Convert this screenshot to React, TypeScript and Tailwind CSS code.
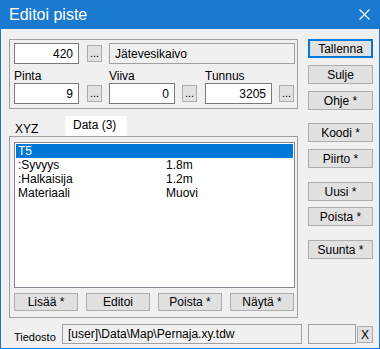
import React from 'react';

const btn =
  'bg-[#e1e1e1] border border-[#adadad] flex items-center justify-center leading-none text-black';

function Dots() {
  return (
    <div className="w-[15px] h-[17px] bg-[#e1e1e1] border border-[#adadad] flex items-end justify-center pb-[2px] leading-none text-[11px]">
      ...
    </div>
  );
}

function NumField({ value, className }: { value: string; className: string }) {
  return (
    <div
      className={`${className} h-[21px] bg-white border border-[#7a7a7a] flex items-center justify-end pr-[5px]`}
    >
      {value}
    </div>
  );
}

const rows = [
  { name: ':Syvyys', value: '1.8m' },
  { name: ':Halkaisija', value: '1.2m' },
  { name: 'Materiaali', value: 'Muovi' },
];

export default function App() {
  return (
    <div className="w-[380px] h-[349px] bg-[#f0f0f0] border-x border-b border-[#1a7ad0] flex flex-col font-['Liberation_Sans',Arial,sans-serif] text-[12px] text-black select-none overflow-hidden">
      {/* title bar */}
      <div className="-mx-px h-[29px] bg-[#1a7ad0] flex items-center justify-between pl-[9px] pr-[9px] text-white">
        <span className="text-[16px] leading-none">Editoi piste</span>
        <svg width="11" height="11" viewBox="0 0 11 11" className="mr-[1px]">
          <path d="M0.5 0.5 L10.5 10.5 M10.5 0.5 L0.5 10.5" stroke="white" strokeWidth="1.1" />
        </svg>
      </div>

      <div className="flex pl-[8px] pt-[10px]">
        {/* left column */}
        <div className="w-[289px] flex flex-col">
          {/* group box */}
          <div className="h-[70px] border border-[#a0a0a0] pl-[4px] pt-[3px] flex flex-col">
            <div className="flex items-center">
              <NumField value="420" className="w-[65px]" />
              <div className="ml-[8px]">
                <Dots />
              </div>
              <div className="ml-[7px] w-[186px] h-[21px] border border-[#a0a0a0] bg-[#f0f0f0] flex items-center pl-[5px]">
                Jätevesikaivo
              </div>
            </div>
            <div className="flex mt-[5px]">
              <div className="flex flex-col">
                <div className="h-[14px] leading-[14px]">Pinta</div>
                <div className="flex items-center">
                  <NumField value="9" className="w-[65px]" />
                  <div className="ml-[8px]">
                    <Dots />
                  </div>
                </div>
              </div>
              <div className="flex flex-col ml-[7px]">
                <div className="h-[14px] leading-[14px]">Viiva</div>
                <div className="flex items-center">
                  <NumField value="0" className="w-[66px]" />
                  <div className="ml-[7px]">
                    <Dots />
                  </div>
                </div>
              </div>
              <div className="flex flex-col ml-[8px]">
                <div className="h-[14px] leading-[14px]">Tunnus</div>
                <div className="flex items-center">
                  <NumField value="3205" className="w-[67px]" />
                  <div className="ml-[7px]">
                    <Dots />
                  </div>
                </div>
              </div>
            </div>
          </div>

          {/* tabs */}
          <div className="flex mt-[7px] h-[20px] items-end">
            <div className="w-[56px] h-[18px] pl-[6px] leading-[18px] pt-[2px]">XYZ</div>
            <div className="w-[62px] h-[20px] bg-white pl-[8px] leading-[18px]">Data (3)</div>
          </div>

          {/* tab panel */}
          <div className="h-[182px] border border-[#a0a0a0] pl-[4px] pt-[5px] flex flex-col">
            <div className="w-[281px] h-[146px] bg-white border border-[#828790] p-px">
              <div className="h-[14px] bg-[#0078d7] text-white pl-[2px] leading-[14px]">T5</div>
              {rows.map((r) => (
                <div key={r.name} className="h-[14px] flex leading-[14px] pl-[2px]">
                  <span className="w-[148px]">{r.name}</span>
                  <span>{r.value}</span>
                </div>
              ))}
            </div>
            <div className="flex gap-[8px] mt-[5px]">
              <div className={`${btn} w-[64px] h-[18px]`}>Lisää *</div>
              <div className={`${btn} w-[64px] h-[18px]`}>Editoi</div>
              <div className={`${btn} w-[64px] h-[18px]`}>Poista *</div>
              <div className={`${btn} w-[64px] h-[18px]`}>Näytä *</div>
            </div>
          </div>
        </div>

        {/* right buttons */}
        <div className="ml-[10px] w-[65px] flex flex-col">
          <div className="h-[19px] border-2 border-[#0078d7] bg-[#e1e1e1] flex items-center justify-center leading-none">
            Tallenna
          </div>
          <div className={`${btn} h-[19px] mt-[7px]`}>Sulje</div>
          <div className={`${btn} h-[19px] mt-[7px]`}>Ohje *</div>
          <div className={`${btn} h-[19px] mt-[13px]`}>Koodi *</div>
          <div className={`${btn} h-[19px] mt-[7px]`}>Piirto *</div>
          <div className={`${btn} h-[19px] mt-[14px]`}>Uusi *</div>
          <div className={`${btn} h-[19px] mt-[6px]`}>Poista *</div>
          <div className={`${btn} h-[19px] mt-[14px]`}>Suunta *</div>
        </div>
      </div>

      {/* file row */}
      <div className="flex items-end pl-[13px] mt-[6px]">
        <span className="w-[48px] leading-[14px] text-[11px]">Tiedosto</span>
        <div className="w-[240px] h-[20px] border border-[#a0a0a0] bg-[#f0f0f0] flex items-center pl-[5px]">
          [user]\Data\Map\Pernaja.xy.tdw
        </div>
        <div className="ml-[6px] w-[48px] h-[20px] border border-[#a0a0a0] bg-[#f0f0f0]" />
        <div className={`${btn} ml-[1px] w-[16px] h-[17px] mb-[1px]`}>X</div>
      </div>
    </div>
  );
}
